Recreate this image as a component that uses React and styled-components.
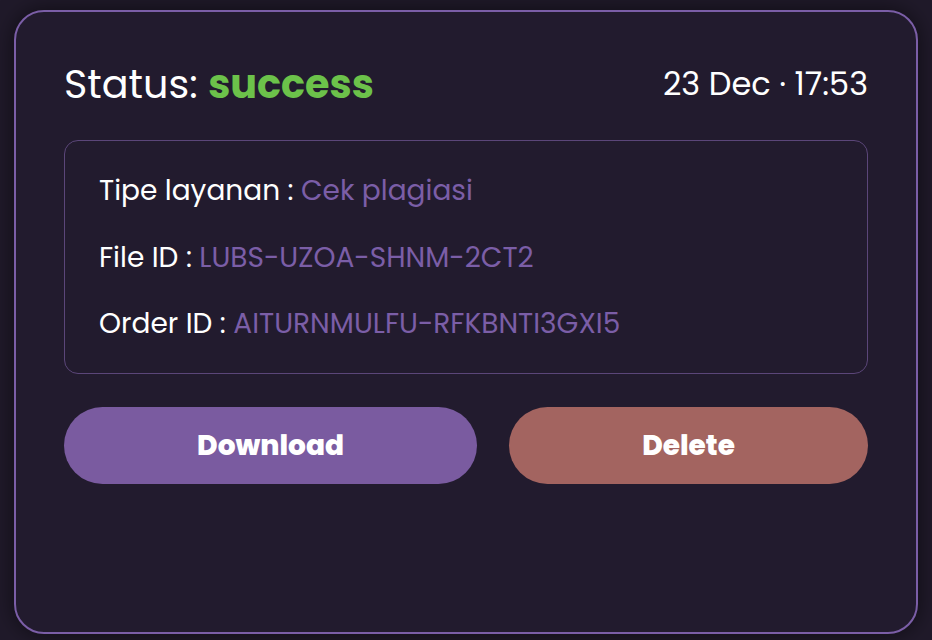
import React from "react";
import styled, { createGlobalStyle } from "styled-components";

const GlobalStyle = createGlobalStyle`
  html, body {
    margin: 0;
    padding: 0;
    background: #201a2a;
    font-family: "Poppins", "Inter", "Open Sans", sans-serif;
  }
  * {
    box-sizing: border-box;
  }
`;

const Page = styled.div`
  width: 932px;
  height: 640px;
  padding: 10px 14px 6px 14px;
`;

const Card = styled.div`
  height: 100%;
  border: 2px solid #7b5ea7;
  border-radius: 30px;
  background: #221b2e;
  box-shadow: 0 0 22px rgba(0, 0, 0, 0.55);
  padding: 50px 48px 0 48px;
  display: flex;
  flex-direction: column;
`;

const Header = styled.div`
  display: flex;
  justify-content: space-between;
  align-items: center;
  height: 44px;
  color: #ffffff;
`;

const Status = styled.div`
  font-size: 39.7px;
  font-weight: 400;
`;

const StatusValue = styled.span`
  color: #6cc24a;
  font-weight: 700;
`;

const Time = styled.div`
  font-size: 32px;
  font-weight: 400;
`;

const InfoBox = styled.div`
  margin-top: 34px;
  border: 1.5px solid #5b4679;
  border-radius: 14px;
  padding: 32px 34px 31px 34px;
  display: flex;
  flex-direction: column;
  gap: 30.5px;
`;

const Row = styled.div`
  font-size: 28px;
  line-height: 36px;
  color: #ffffff;
`;

const Value = styled.span`
  color: #7b5ea7;
`;

const Actions = styled.div`
  margin-top: 33px;
  display: flex;
  gap: 32px;
`;

const Button = styled.button`
  flex: 1 1 auto;
  height: 77px;
  border: none;
  border-radius: 40px;
  background: ${(props) => (props.danger ? "#a36460" : "#7a5ba0")};
  color: #ffffff;
  font-family: inherit;
  font-size: 28px;
  font-weight: 800;
  cursor: pointer;
`;

export default function App() {
  return (
    <>
      <GlobalStyle />
      <Page>
        <Card>
          <Header>
            <Status>
              Status: <StatusValue>success</StatusValue>
            </Status>
            <Time>23 Dec · 17:53</Time>
          </Header>
          <InfoBox>
            <Row>
              Tipe layanan : <Value>Cek plagiasi</Value>
            </Row>
            <Row>
              File ID : <Value>LUBS-UZOA-SHNM-2CT2</Value>
            </Row>
            <Row>
              Order ID : <Value>AITURNMULFU-RFKBNTI3GXI5</Value>
            </Row>
          </InfoBox>
          <Actions>
            <Button>Download</Button>
            <Button danger>Delete</Button>
          </Actions>
        </Card>
      </Page>
    </>
  );
}
